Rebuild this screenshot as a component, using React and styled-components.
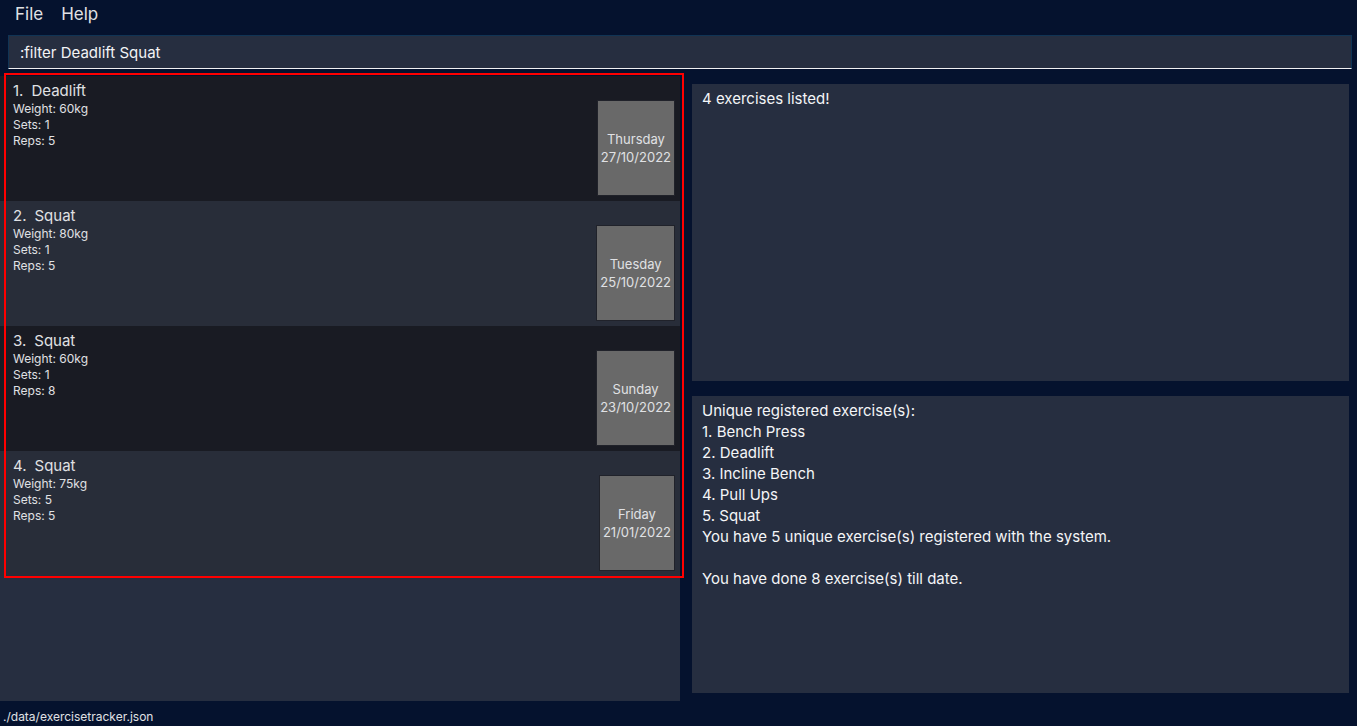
import React, { useState } from "react";
import styled, { createGlobalStyle } from "styled-components";

const GlobalStyle = createGlobalStyle`
  *, *::before, *::after { box-sizing: border-box; }
  body {
    margin: 0;
    background: #05122e;
    color: #e0e1e4;
    font-family: Inter, "Liberation Sans", sans-serif;
  }
`;

const Window = styled.div`
  display: flex;
  flex-direction: column;
  min-height: 100vh;
`;

const MenuBar = styled.nav`
  display: flex;
  gap: 18px;
  height: 35px;
  padding: 2px 15px 9px;
`;

const MenuButton = styled.button`
  padding: 0;
  border: 0;
  background: none;
  color: #e0e1e4;
  font: inherit;
  font-size: 17px;
  line-height: 24px;
`;

const CommandForm = styled.form`
  display: flex;
  padding: 0 5px 7px 8px;
`;

const CommandInput = styled.input`
  flex: 1;
  min-width: 0;
  height: 34px;
  padding: 0 11px;
  border: 1px solid #103455;
  border-bottom-color: #f0f0f2;
  border-radius: 0;
  outline: 0;
  background: #262e40;
  color: #f2f3f5;
  font: inherit;
  font-size: 15px;
`;

const Main = styled.main`
  flex: 1;
  display: grid;
  grid-template-columns: minmax(0, 680fr) minmax(0, 657fr);
  gap: 12px;
  padding-right: 8px;
`;

const ListPane = styled.section`
  background: #262e40;
`;

const ExerciseList = styled.ul`
  position: relative;
  margin: 0;
  padding: 0;
  list-style: none;

  &::after {
    content: "";
    position: absolute;
    top: -3px;
    right: -4px;
    bottom: -2px;
    left: 4px;
    border: 2px solid #ff0000;
    pointer-events: none;
  }
`;

const ExerciseRow = styled.li`
  display: flex;
  justify-content: space-between;
  min-height: 125px;
  padding: 5px 5px 5px 13px;
  background: #191b23;

  &:nth-child(even) { background: #282d39; }
`;

const ExerciseName = styled.h2`
  display: flex;
  gap: 8px;
  margin: 0;
  font-size: 15px;
  font-weight: 400;
  line-height: 20px;
`;

const Detail = styled.p`
  margin: 0;
  font-size: 12px;
  line-height: 16px;
`;

const DateTile = styled.time`
  display: flex;
  flex-direction: column;
  align-items: center;
  justify-content: center;
  align-self: flex-end;
  height: 96px;
  padding: 0 3px;
  border: 1px solid #20222a;
  background: #696969;
  font-size: 13px;
  line-height: 18px;
`;

const Outputs = styled.div`
  display: grid;
  grid-template-rows: 1fr 1fr;
  gap: 15px;
  padding: 8px 0;
`;

const OutputBox = styled.textarea`
  display: block;
  width: 100%;
  height: 100%;
  padding: 4px 10px;
  border: 0;
  outline: 0;
  resize: none;
  background: #262e40;
  color: #f4f5f7;
  font: inherit;
  font-size: 15px;
  line-height: 21px;
`;

const StatusBar = styled.footer`
  height: 25px;
  padding: 7px 3px 0;
  font-size: 12px;
  line-height: 18px;
`;

const exercises = [
  { name: "Deadlift", weight: 60, sets: 1, reps: 5, day: "Thursday", date: "27/10/2022", iso: "2022-10-27" },
  { name: "Squat", weight: 80, sets: 1, reps: 5, day: "Tuesday", date: "25/10/2022", iso: "2022-10-25" },
  { name: "Squat", weight: 60, sets: 1, reps: 8, day: "Sunday", date: "23/10/2022", iso: "2022-10-23" },
  { name: "Squat", weight: 75, sets: 5, reps: 5, day: "Friday", date: "21/01/2022", iso: "2022-01-21" },
];

const summary = [
  "Unique registered exercise(s):",
  "1. Bench Press",
  "2. Deadlift",
  "3. Incline Bench",
  "4. Pull Ups",
  "5. Squat",
  "You have 5 unique exercise(s) registered with the system.",
  "",
  "You have done 8 exercise(s) till date.",
].join("\n");

export default function App() {
  const [command, setCommand] = useState(":filter Deadlift Squat");

  return (
    <Window>
      <GlobalStyle />
      <MenuBar aria-label="Main menu">
        <MenuButton type="button">File</MenuButton>
        <MenuButton type="button">Help</MenuButton>
      </MenuBar>
      <CommandForm onSubmit={(event) => event.preventDefault()}>
        <CommandInput
          type="text"
          aria-label="Command"
          spellCheck={false}
          value={command}
          onChange={(event) => setCommand(event.target.value)}
        />
      </CommandForm>
      <Main>
        <ListPane aria-label="Exercises">
          <ExerciseList>
            {exercises.map((item, index) => (
              <ExerciseRow key={item.iso}>
                <div>
                  <ExerciseName>
                    <span>{index + 1}.</span>
                    <span>{item.name}</span>
                  </ExerciseName>
                  <Detail>Weight: {item.weight}kg</Detail>
                  <Detail>Sets: {item.sets}</Detail>
                  <Detail>Reps: {item.reps}</Detail>
                </div>
                <DateTile dateTime={item.iso}>
                  <span>{item.day}</span>
                  <span>{item.date}</span>
                </DateTile>
              </ExerciseRow>
            ))}
          </ExerciseList>
        </ListPane>
        <Outputs>
          <OutputBox aria-label="Result" readOnly spellCheck={false} value="4 exercises listed!" />
          <OutputBox aria-label="Summary" readOnly spellCheck={false} value={summary} />
        </Outputs>
      </Main>
      <StatusBar>./data/exercisetracker.json</StatusBar>
    </Window>
  );
}
